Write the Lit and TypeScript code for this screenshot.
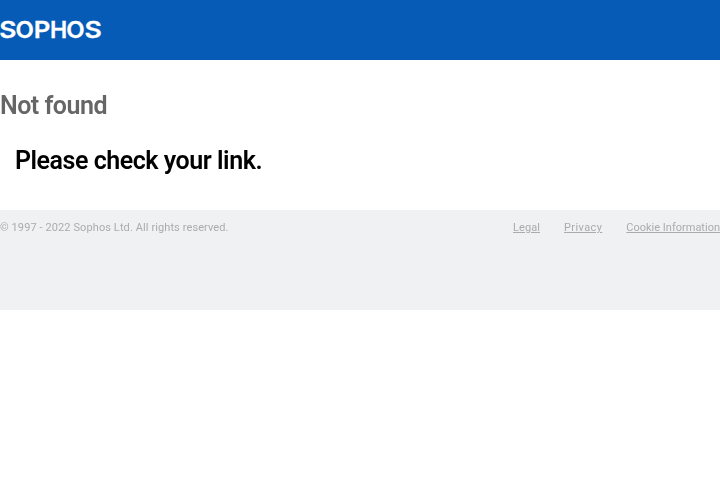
import { LitElement, html, svg, css } from "lit";
import { customElement } from "lit/decorators.js";

const wordmark = [
  { letter: "S", x: -0.8, width: 17.2 },
  { letter: "O", x: 15.6, width: 18.4 },
  { letter: "P", x: 33.8, width: 16.6 },
  { letter: "H", x: 50, width: 17.2 },
  { letter: "O", x: 66.2, width: 18.4 },
  { letter: "S", x: 84.4, width: 17.3 },
];

@customElement("app-root")
export class AppRoot extends LitElement {
  static styles = css`
    :host { display: block; min-height: 480px; background: #fff; font-family: Roboto, "Liberation Sans", sans-serif; }
    header { height: 60px; background: #065bb7; padding-top: 20px; box-sizing: border-box; }
    .logo { display: block; width: 102px; height: 19px; overflow: visible; }
    .logo text { font: 600 23px Inter, sans-serif; fill: #fff; stroke: #fff; stroke-width: 0.3px; }
    main { height: 150px; will-change: transform; }
    h1, h2 { margin: 0; font-size: 25px; line-height: 30px; font-weight: 600; white-space: nowrap; }
    h1 { padding-top: 31px; color: #666; letter-spacing: -0.5px; }
    h2 { padding: 25px 0 0 15px; color: #000; letter-spacing: -0.46px; }
    footer { height: 100px; box-sizing: border-box; padding-top: 10px; background: #f0f1f3; color: #a9acae; font-size: 11px; line-height: 15px; white-space: nowrap; }
    .row { display: flex; justify-content: space-between; will-change: transform; }
    .copyright { letter-spacing: 0.1px; }
    nav { display: flex; gap: 24px; }
    a { color: inherit; text-decoration: underline; }
    .legal { letter-spacing: 0.08px; }
    .privacy { letter-spacing: 0.4px; }
  `;

  render() {
    return html`
      <header>
        <svg class="logo" viewBox="0 0 102 19" role="img" aria-label="Sophos">
          ${wordmark.map((g) => svg`<text x=${g.x} y="18" textLength=${g.width} lengthAdjust="spacingAndGlyphs">${g.letter}</text>`)}
        </svg>
      </header>
      <main>
        <h1>Not found</h1>
        <h2>Please check your link.</h2>
      </main>
      <footer>
        <div class="row">
          <span class="copyright">© 1997 - 2022 Sophos Ltd. All rights reserved.</span>
          <nav>
            <a class="legal" href="#">Legal</a>
            <a class="privacy" href="#">Privacy</a>
            <a href="#">Cookie Information</a>
          </nav>
        </div>
      </footer>
    `;
  }
}
